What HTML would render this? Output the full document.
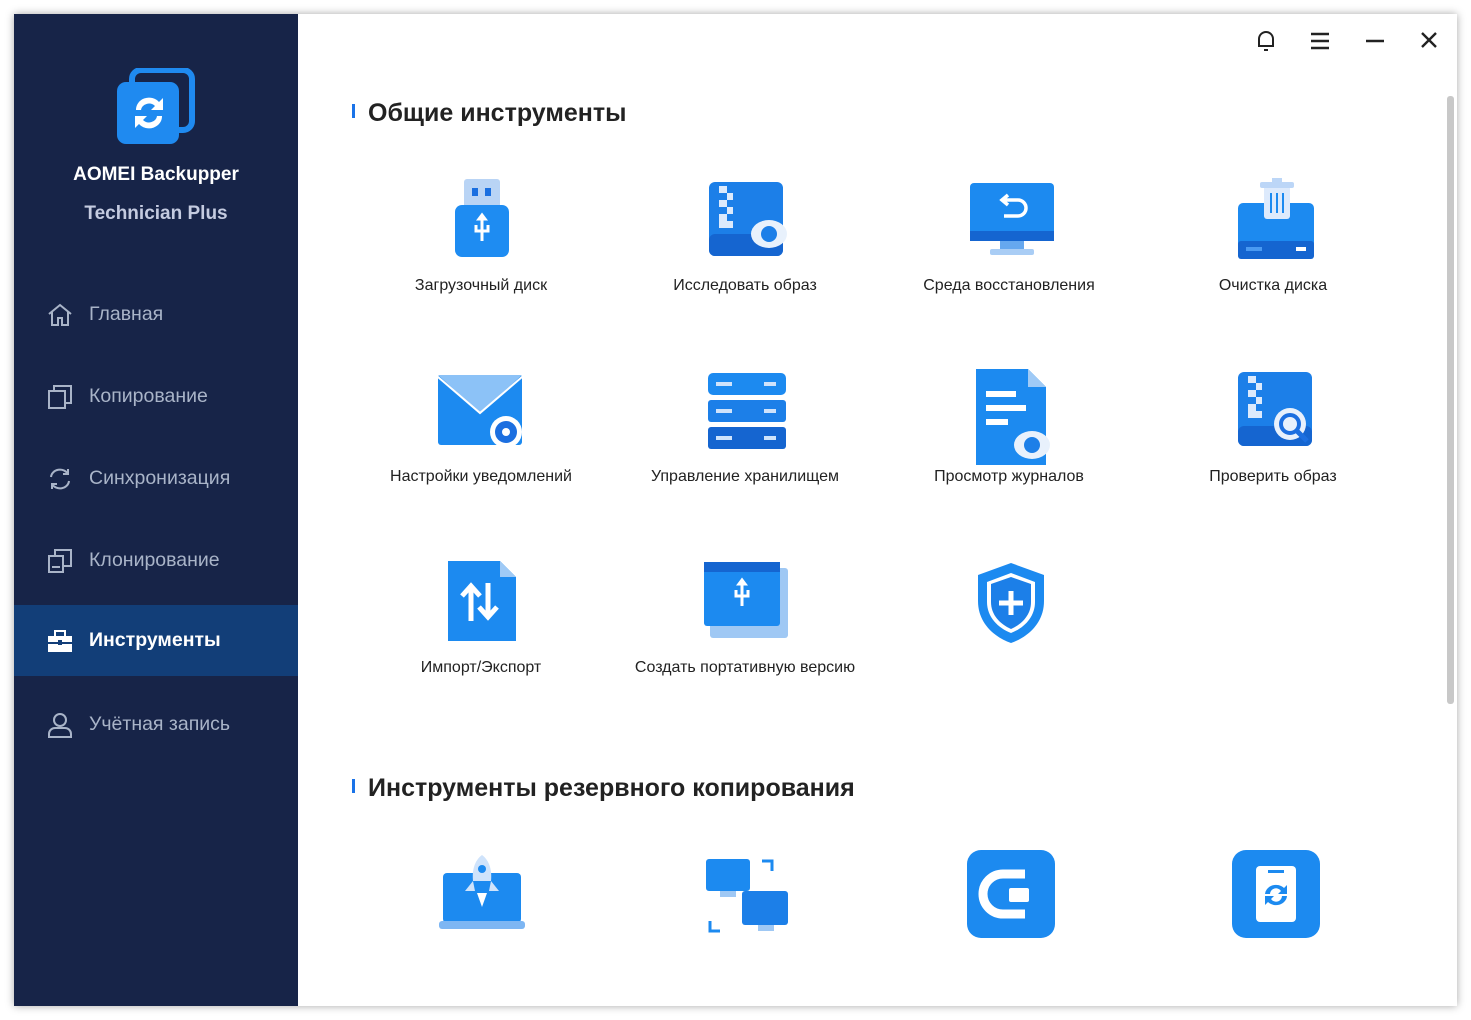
<!DOCTYPE html>
<html><head><meta charset="utf-8"><style>
*{margin:0;padding:0;box-sizing:border-box}
body{width:1471px;height:1020px;background:#fff;font-family:"Liberation Sans","DejaVu Sans",sans-serif;position:relative;overflow:hidden}
#win{position:absolute;left:14px;top:14px;width:1443px;height:992px;background:#fff;box-shadow:0 0 8px rgba(0,0,0,.35)}
#side{position:absolute;left:0;top:0;width:284px;height:992px;background:#172448}
.brand{position:absolute;left:0;width:284px;text-align:center;font-weight:bold;font-size:19px}
.nav{position:absolute;left:0;width:284px;height:71px;display:flex;align-items:center;color:#a9b4c8;font-size:19.5px}
.nav svg{margin-left:33px;margin-right:16px}
.nav.act{background:#123e78;color:#fff;font-weight:bold}
.h{position:absolute;left:338px;font-size:25px;font-weight:bold;color:#222;display:flex;align-items:center}
.h:before{content:"";display:inline-block;width:3px;height:14px;background:#1a73e8;margin-right:13px;margin-top:-6px}
.lbl{position:absolute;width:264px;text-align:center;font-size:16px;color:#222}
.ic{position:absolute}
#sb{position:absolute;left:1433px;top:82px;width:7px;height:608px;background:#c8c8c8;border-radius:3px}
</style></head><body>
<div id="win">
<div id="side">
 <svg style="position:absolute;left:102px;top:54px" width="80" height="78" viewBox="0 0 80 78">
  <rect x="16" y="2" width="60" height="60" rx="9" fill="none" stroke="#1f8af0" stroke-width="6"/>
  <rect x="1" y="14" width="62" height="62" rx="9" fill="#1f8af0"/>
  <path d="M20 42a13 12 0 0 1 23-8l4-4v12h-12l4-4a8 7 0 0 0-14 4z M46 48a13 12 0 0 1-23 8l-4 4V48h12l-4 4a8 7 0 0 0 14-4z" fill="#fff"/>
 </svg>
 <div class="brand" style="top:150px;color:#fff">AOMEI Backupper</div>
 <div class="brand" style="top:189px;color:#c4cbe0">Technician Plus</div>
 <div class="nav" style="top:265px"><svg width="26" height="26" viewBox="0 0 26 26" fill="none" stroke="#a9b4c8" stroke-width="2"><path d="M2 12L13 3l11 9M5 10v13h6v-7h4v7h6V10"/></svg>Главная</div>
 <div class="nav" style="top:347px"><svg width="26" height="26" viewBox="0 0 26 26" fill="none" stroke="#a9b4c8" stroke-width="2"><rect x="2" y="7" width="16" height="17"/><path d="M7 7V2h17v17h-6"/></svg>Копирование</div>
 <div class="nav" style="top:429px"><svg width="26" height="26" viewBox="0 0 26 26" fill="none" stroke="#a9b4c8" stroke-width="2"><path d="M4 11a9 8 0 0 1 17-3M22 15a9 8 0 0 1-17 3M21 3v5h-5M5 23v-5h5"/></svg>Синхронизация</div>
 <div class="nav" style="top:511px"><svg width="26" height="26" viewBox="0 0 26 26" fill="none" stroke="#a9b4c8" stroke-width="2"><rect x="2" y="8" width="14" height="16"/><path d="M8 8V2h16v16h-8M5 19h8"/></svg>Клонирование</div>
 <div class="nav act" style="top:591px"><svg width="26" height="26" viewBox="0 0 26 26"><rect x="8" y="3" width="10" height="6" fill="none" stroke="#fff" stroke-width="2"/><rect x="1" y="8" width="24" height="16" fill="#fff"/><rect x="1" y="14" width="24" height="2" fill="#123e78"/><rect x="11" y="12" width="4" height="5" fill="#123e78"/></svg>Инструменты</div>
 <div class="nav" style="top:675px"><svg width="26" height="26" viewBox="0 0 26 26" fill="none" stroke="#a9b4c8" stroke-width="2"><circle cx="13" cy="8" r="6"/><path d="M2 25v-3a6 6 0 0 1 6-6h10a6 6 0 0 1 6 6v3z"/></svg>Учётная запись</div>
</div>
<svg style="position:absolute;left:1240px;top:15px" width="24" height="24" viewBox="0 0 24 24" fill="none" stroke="#222" stroke-width="2"><path d="M5 17V10a7 7 0 0 1 14 0v7H4h16M10 21h4"/></svg>
<svg style="position:absolute;left:1296px;top:17px" width="20" height="20" viewBox="0 0 20 20" stroke="#222" stroke-width="2.4"><path d="M1 3h18M1 10h18M1 17h18"/></svg>
<svg style="position:absolute;left:1351px;top:17px" width="20" height="20" viewBox="0 0 20 20" stroke="#222" stroke-width="2.4"><path d="M1 10h18"/></svg>
<svg style="position:absolute;left:1406px;top:17px" width="18" height="18" viewBox="0 0 18 18" stroke="#222" stroke-width="2.4"><path d="M2 2l14 14M16 2L2 16"/></svg>
<div id="sb"></div>

<div class="h" style="top:85px">Общие инструменты</div>
<div class="h" style="top:760px">Инструменты резервного копирования</div>

<svg class="ic" style="left:440px;top:165px" width="56" height="80" viewBox="0 0 56 80"><rect x="10" y="0" width="36" height="30" rx="3" fill="#b9d4f5"/><rect x="18" y="9" width="6" height="8" fill="#1a6fe0"/><rect x="31" y="9" width="6" height="8" fill="#1a6fe0"/><rect x="1" y="26" width="54" height="52" rx="7" fill="#1e8cf2"/><path d="M28 40v22M22 46v6h12v-6M28 36l-3 4h6z" stroke="#fff" stroke-width="3" fill="none"/></svg>
<svg class="ic" style="left:695px;top:168px" width="78" height="74" viewBox="0 0 78 74"><rect x="0" y="0" width="74" height="74" rx="6" fill="#1c7fe8"/><rect x="0" y="52" width="74" height="22" rx="6" fill="#1565d0"/><path d="M10 4h8v7h-8zM18 11h6v7h-6zM10 18h8v7h-8zM18 25h6v7h-6zM10 32h8v7h-8zM10 39h14v7h-14z" fill="#dceafc"/><ellipse cx="60" cy="52" rx="18" ry="14" fill="#e8f1fc"/><circle cx="60" cy="52" r="8" fill="#1c7fe8"/></svg>
<svg class="ic" style="left:956px;top:169px" width="84" height="78" viewBox="0 0 84 78"><rect x="0" y="0" width="84" height="58" rx="4" fill="#1c8af0"/><rect x="0" y="48" width="84" height="10" fill="#1565d0"/><rect x="30" y="58" width="24" height="10" fill="#66a8ef"/><rect x="20" y="66" width="44" height="6" rx="2" fill="#a9cdf5"/><path d="M34 17h14a8 8 0 0 1 0 16H34M38 12l-6 5 6 5" stroke="#fff" stroke-width="3.5" fill="none"/></svg>
<svg class="ic" style="left:1222px;top:163px" width="80" height="82" viewBox="0 0 80 82"><rect x="2" y="26" width="76" height="56" rx="5" fill="#1c8af0"/><rect x="2" y="64" width="76" height="18" rx="3" fill="#1565d0"/><rect x="60" y="70" width="10" height="4" fill="#fff"/><rect x="10" y="70" width="16" height="4" fill="#4a9af2"/><rect x="28" y="6" width="26" height="36" rx="3" fill="#ddeafc"/><rect x="24" y="5" width="34" height="6" rx="2" fill="#bcd6f7"/><rect x="36" y="1" width="10" height="5" fill="#bcd6f7"/><path d="M35 16v20M41 16v20M47 16v20" stroke="#1c8af0" stroke-width="2"/></svg>
<div class="lbl" style="left:335px;top:263px">Загрузочный диск</div>
<div class="lbl" style="left:599px;top:263px">Исследовать образ</div>
<div class="lbl" style="left:863px;top:263px">Среда восстановления</div>
<div class="lbl" style="left:1127px;top:263px">Очистка диска</div>

<svg class="ic" style="left:424px;top:361px" width="88" height="74" viewBox="0 0 88 74"><rect x="0" y="0" width="84" height="70" rx="3" fill="#1c8af0"/><path d="M0 0l42 38L84 0z" fill="#8cc2f7"/><path d="M0 2l42 36L84 2" stroke="#fff" stroke-width="2" fill="none"/><circle cx="68" cy="57" r="16" fill="#fff"/><circle cx="68" cy="57" r="11" fill="#1c6fe0"/><circle cx="68" cy="57" r="4" fill="#fff"/></svg>
<svg class="ic" style="left:694px;top:359px" width="78" height="78" viewBox="0 0 78 78"><rect x="0" y="0" width="78" height="22" rx="5" fill="#1c8af0"/><rect x="0" y="27" width="78" height="22" rx="3" fill="#1c7fe8"/><rect x="0" y="54" width="78" height="22" rx="3" fill="#1565d0"/><g fill="#cfe3fb"><rect x="56" y="9" width="12" height="4"/><rect x="56" y="36" width="12" height="4"/><rect x="56" y="63" width="12" height="4"/><rect x="8" y="9" width="16" height="4"/><rect x="8" y="36" width="16" height="4"/><rect x="8" y="63" width="16" height="4"/></g></svg>
<svg class="ic" style="left:962px;top:355px" width="86" height="96" viewBox="0 0 86 96"><path d="M0 0h52l18 18v78H0z" fill="#1c8af0"/><path d="M52 0v18h18z" fill="#9fcaf6"/><g fill="#fff"><rect x="10" y="22" width="30" height="6"/><rect x="10" y="36" width="40" height="6"/><rect x="10" y="50" width="22" height="6"/></g><ellipse cx="56" cy="76" rx="18" ry="14" fill="#e8f1fc"/><circle cx="56" cy="76" r="8" fill="#1c7fe8"/></svg>
<svg class="ic" style="left:1224px;top:358px" width="78" height="76" viewBox="0 0 78 76"><rect x="0" y="0" width="74" height="74" rx="6" fill="#1c7fe8"/><rect x="0" y="54" width="74" height="20" rx="6" fill="#1565d0"/><path d="M10 4h8v7h-8zM18 11h6v7h-6zM10 18h8v7h-8zM18 25h6v7h-6zM10 32h8v7h-8zM10 39h14v7h-14z" fill="#dceafc"/><circle cx="52" cy="52" r="16" fill="#e8f1fc"/><circle cx="52" cy="52" r="9" fill="none" stroke="#1c6fe0" stroke-width="4"/><path d="M59 59l10 10" stroke="#1c6fe0" stroke-width="5"/></svg>
<div class="lbl" style="left:335px;top:454px">Настройки уведомлений</div>
<div class="lbl" style="left:599px;top:454px">Управление хранилищем</div>
<div class="lbl" style="left:863px;top:454px">Просмотр журналов</div>
<div class="lbl" style="left:1127px;top:454px">Проверить образ</div>

<svg class="ic" style="left:434px;top:547px" width="70" height="80" viewBox="0 0 70 80"><path d="M0 0h52l16 16v64H0z" fill="#1c8af0"/><path d="M52 0v16h16z" fill="#9fcaf6"/><path d="M23 60V26M14 35l9-10 9 10M40 22v34M31 46l9 10 9-10" stroke="#fff" stroke-width="5" fill="none"/></svg>
<svg class="ic" style="left:690px;top:548px" width="84" height="80" viewBox="0 0 84 80"><rect x="6" y="6" width="78" height="70" rx="3" fill="#9fc8f4"/><rect x="0" y="0" width="76" height="64" rx="3" fill="#1c8af0"/><rect x="0" y="0" width="76" height="10" fill="#1565d0"/><path d="M38 22v22M32 28v6h12v-6M38 18l-3 4h6z" stroke="#fff" stroke-width="3" fill="none"/></svg>
<svg class="ic" style="left:962px;top:547px" width="70" height="84" viewBox="0 0 70 84"><path d="M35 2l33 12v26c0 22-16 36-33 42C18 76 2 62 2 40V14z" fill="#1c8af0"/><path d="M35 12l24 9v20c0 15-11 26-24 31C22 67 11 56 11 41V21z" fill="#fff"/><path d="M35 16l20 7v18c0 13-9 22-20 27-11-5-20-14-20-27V23z" fill="#1c7fe8"/><path d="M35 30v24M23 42h24" stroke="#fff" stroke-width="5"/></svg>
<div class="lbl" style="left:335px;top:645px">Импорт/Экспорт</div>
<div class="lbl" style="left:599px;top:645px">Создать портативную версию</div>

<svg class="ic" style="left:425px;top:841px" width="86" height="78" viewBox="0 0 86 78"><rect x="4" y="18" width="78" height="50" rx="4" fill="#1c8af0"/><rect x="0" y="66" width="86" height="8" rx="3" fill="#7db6f3"/><path d="M43 0c8 6 10 16 9 26H34c-1-10 1-20 9-26z" fill="#cfe3fb"/><path d="M34 26l-8 10h10M52 26l8 10h-10" fill="#cfe3fb"/><path d="M38 38h10l-5 14z" fill="#fff"/><circle cx="43" cy="14" r="4" fill="#1c8af0"/></svg>
<svg class="ic" style="left:692px;top:845px" width="82" height="84" viewBox="0 0 82 84"><rect x="0" y="0" width="44" height="32" rx="3" fill="#1c8af0"/><rect x="14" y="32" width="16" height="6" fill="#9fc8f4"/><rect x="36" y="32" width="46" height="34" rx="3" fill="#1c7fe8"/><rect x="52" y="66" width="16" height="6" fill="#9fc8f4"/><path d="M56 2h10v10M4 62v10h10" stroke="#1c8af0" stroke-width="3" fill="none"/></svg>
<svg class="ic" style="left:953px;top:836px" width="88" height="88" viewBox="0 0 88 88"><rect x="0" y="0" width="88" height="88" rx="14" fill="#1c8af0"/><path d="M58 24H36a20 20 0 0 0 0 40h22" stroke="#fff" stroke-width="9" fill="none"/><rect x="42" y="38" width="20" height="14" rx="2" fill="#fff"/></svg>
<svg class="ic" style="left:1218px;top:836px" width="88" height="88" viewBox="0 0 88 88"><rect x="0" y="0" width="88" height="88" rx="14" fill="#1c8af0"/><rect x="24" y="16" width="40" height="56" rx="4" fill="#fff"/><rect x="36" y="20" width="16" height="3" fill="#1c8af0"/><path d="M33 44a11 10 0 0 1 19-6l3-3v9h-9l3-3a6 6 0 0 0-11 3zM55 46a11 10 0 0 1-19 6l-3 3v-9h9l-3 3a6 6 0 0 0 11-3z" fill="#1c8af0"/></svg>
</div>
</body></html>
